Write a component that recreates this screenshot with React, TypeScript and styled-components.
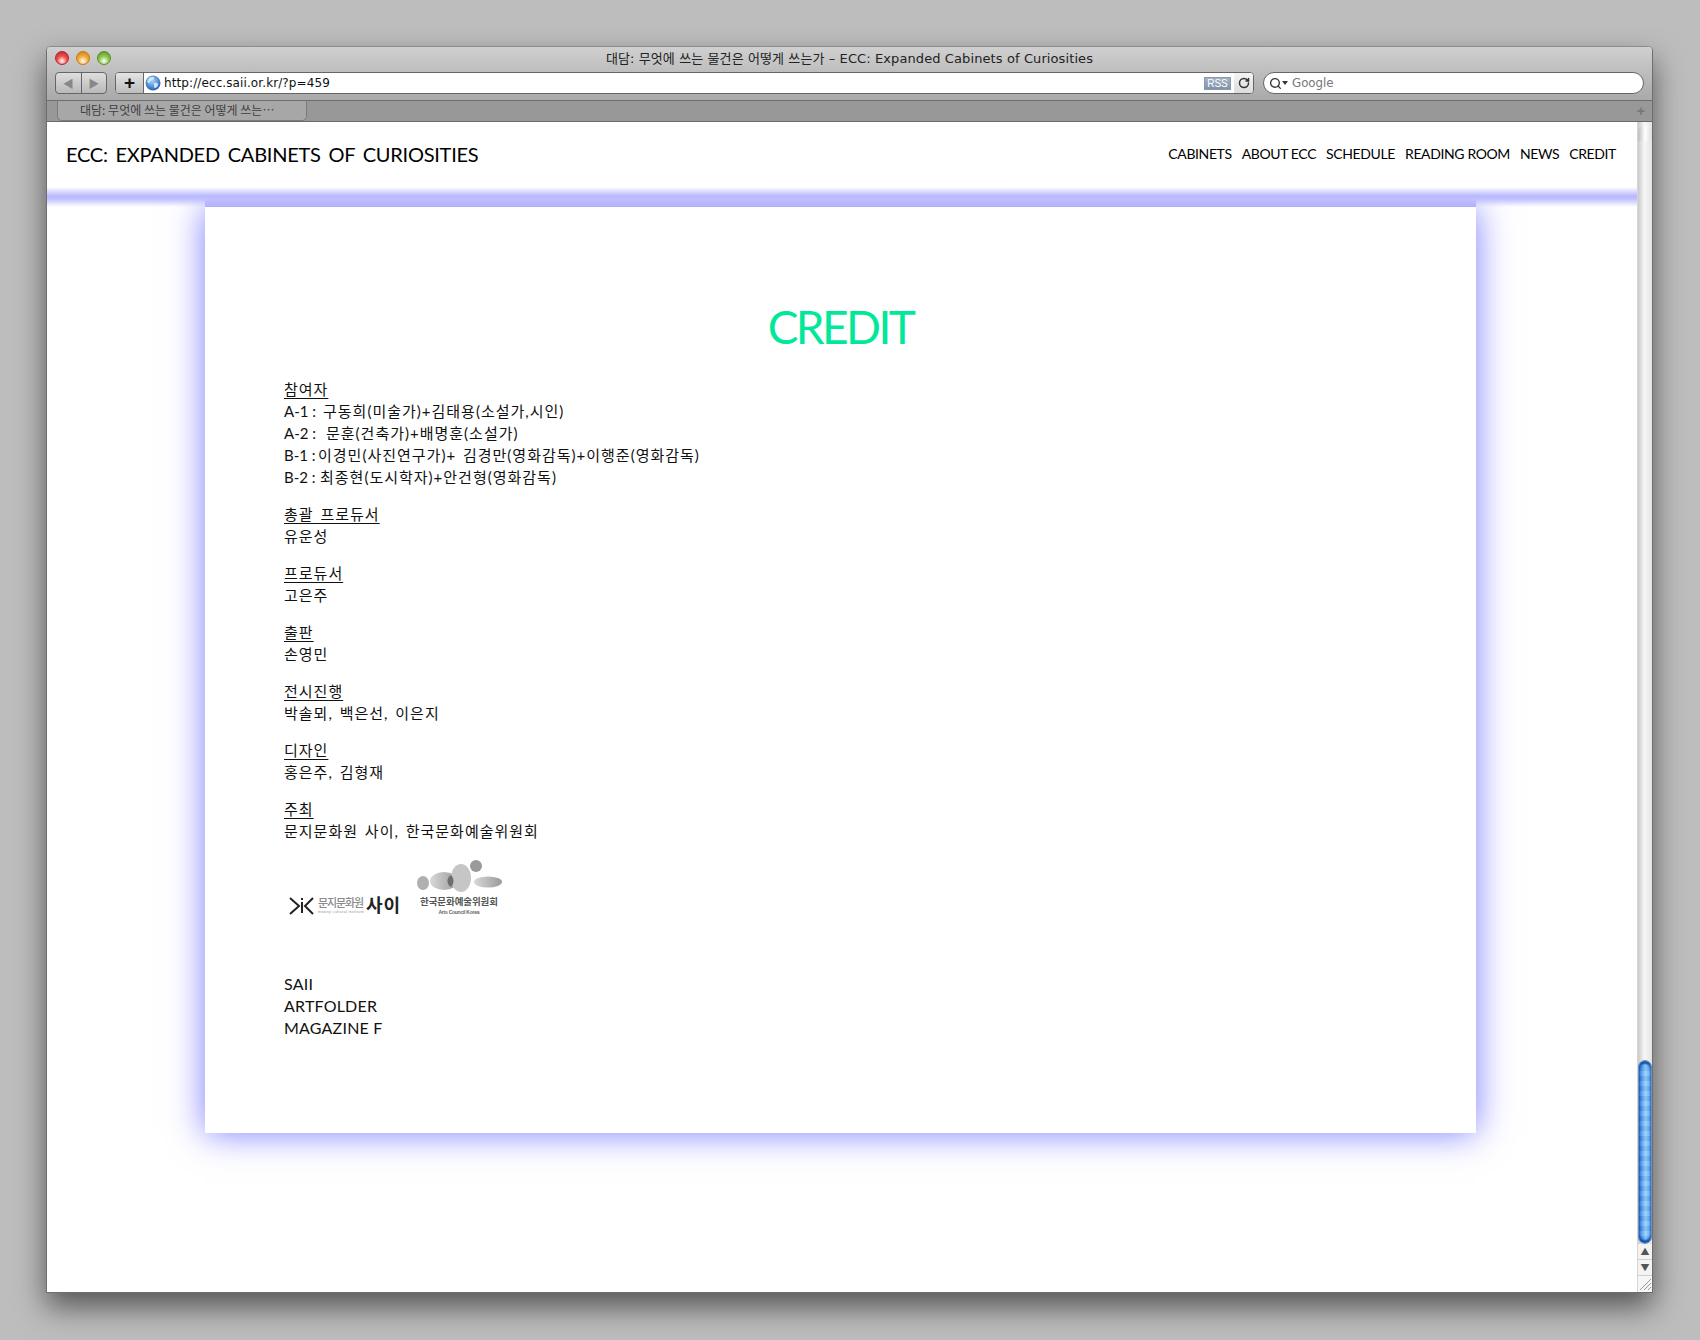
import React from 'react';
import styled, { createGlobalStyle } from 'styled-components';
import { RotateCw, Search } from 'lucide-react';

const KO = `'Noto Sans CJK KR', sans-serif`;

const GlobalStyle = createGlobalStyle`
  html, body { margin: 0; padding: 0; }
  body {
    width: 1700px;
    height: 1340px;
    overflow: hidden;
    background: #bdbdbd;
    font-family: 'Lato', ${KO};
  }
`;

const Desktop = styled.div`
  padding: 46px 47px 48px 46px;
  height: 1340px;
  box-sizing: border-box;
`;

const Window = styled.div`
  height: 1245px;
  display: flex;
  flex-direction: column;
  border: 1px solid #6e6e6e;
  border-top-color: #8c8c8c;
  border-radius: 5px 5px 0 0;
  box-shadow: 0 14px 30px rgba(0, 0, 0, 0.55);
  overflow: hidden;
  background: #fff;
`;

const Chrome = styled.div`
  height: 53px;
  flex: none;
  display: flex;
  flex-direction: column;
  background: linear-gradient(#d0d0d0, #a9a9a9);
  border-bottom: 1px solid #6f6f6f;
`;

const TitleRow = styled.div`
  position: relative;
  height: 25px;
  padding-bottom: 4px;
  box-sizing: border-box;
  display: flex;
  align-items: center;
  justify-content: center;
  font: 13px 'DejaVu Sans', ${KO};
  letter-spacing: 0.1px;
  color: #222;
`;

const Lights = styled.div`
  position: absolute;
  left: 8px;
  top: 4px;
  display: flex;
  gap: 7px;
`;

const Light = styled.span<{ $color: string; $dark: string }>`
  width: 14px;
  height: 14px;
  border-radius: 50%;
  border: 1px solid ${(p) => p.$dark};
  box-sizing: border-box;
  background: radial-gradient(circle at 50% 75%, #fff 0%, ${(p) => p.$color} 45%, ${(p) => p.$dark} 100%);
`;

const ToolRow = styled.div`
  height: 22px;
  display: flex;
  align-items: stretch;
  padding: 0 8px;
`;

const NavGroup = styled.div`
  width: 52px;
  display: flex;
  margin-right: 8px;
  border: 1px solid #666;
  border-radius: 4px;
  box-sizing: border-box;
  background: linear-gradient(#dedede, #b9b9b9);
`;

const NavButton = styled.div<{ $first?: boolean }>`
  flex: 1;
  display: flex;
  align-items: center;
  justify-content: center;
  color: #888;
  font-size: 11px;
  border-right: ${(p) => (p.$first ? '1px solid #666' : 'none')};
`;

const AddressBox = styled.div`
  width: 1139px;
  display: flex;
  align-items: stretch;
  border: 1px solid #666;
  border-radius: 4px;
  box-sizing: border-box;
  overflow: hidden;
  background: #fff;
`;

const PlusButton = styled.div`
  width: 27px;
  flex: none;
  display: flex;
  align-items: center;
  justify-content: center;
  font: bold 19px 'Liberation Sans', sans-serif;
  color: #111;
  background: linear-gradient(#e4e4e4, #bdbdbd);
  border-right: 1px solid #666;
`;

const UrlText = styled.div`
  flex: 1;
  display: flex;
  align-items: center;
  gap: 3px;
  padding-left: 1px;
  font: 12px 'DejaVu Sans', sans-serif;
  letter-spacing: 0.1px;
  color: #111;
`;

const RssBadge = styled.div`
  width: 27px;
  height: 13px;
  align-self: center;
  margin-right: 3px;
  display: flex;
  align-items: center;
  justify-content: center;
  font: 10px 'Liberation Sans', sans-serif;
  color: #fff;
  background: linear-gradient(#a3b3c4, #7f93a8);
  border: 1px solid #8a9aac;
  box-sizing: border-box;
`;

const ReloadButton = styled.div`
  width: 19px;
  display: flex;
  align-items: center;
  justify-content: center;
  color: #333;
  background: linear-gradient(#f4f4f4, #dcdcdc);
`;

const SearchBox = styled.div`
  width: 381px;
  margin-left: 9px;
  display: flex;
  align-items: center;
  padding-left: 5px;
  border: 1px solid #666;
  border-radius: 11px;
  box-sizing: border-box;
  background: #fff;
  font: 11.8px 'DejaVu Sans', sans-serif;
  color: #777;
`;

const Caret = styled.span`
  width: 0;
  height: 0;
  margin: 0 4px 0 0;
  border: 3px solid transparent;
  border-top: 4px solid #333;
  border-bottom: 0;
`;

const TabBar = styled.div`
  height: 20px;
  flex: none;
  display: flex;
  justify-content: space-between;
  padding: 0 7px 0 10px;
  background: #989898;
  border-bottom: 1px solid #6a6a6a;
`;

const Tab = styled.div`
  width: 250px;
  box-sizing: border-box;
  padding-left: 22px;
  padding-bottom: 2px;
  display: flex;
  align-items: center;
  border: 1px solid #7c7c7c;
  border-top: 0;
  border-radius: 0 0 5px 5px;
  background: #a7a7a7;
  font: 12px ${KO};
  color: #3f3f3f;
`;

const TabPlus = styled.div`
  align-self: center;
  font: bold 14px 'Liberation Sans', sans-serif;
  color: #777;
`;

const Viewport = styled.div`
  flex: 1;
  min-height: 0;
  display: flex;
`;

const Page = styled.div`
  flex: 1;
  min-width: 0;
  position: relative;
  overflow: hidden;
  background: #fff;
`;

const Header = styled.header`
  position: relative;
  z-index: 2;
  height: 65px;
  display: flex;
  align-items: flex-start;
  justify-content: space-between;
  padding: 20px 21px 0 19px;
  box-sizing: border-box;
  background: #fff;
  color: #000;
`;

const SiteTitle = styled.div`
  font-size: 20px;
  line-height: 24px;
  letter-spacing: -0.25px;
  word-spacing: 3px;
  white-space: nowrap;
`;

const Nav = styled.nav`
  display: flex;
  gap: 10px;
  font-size: 14px;
  letter-spacing: -0.38px;
  line-height: 24px;
  white-space: nowrap;
`;

const HeaderGlow = styled.div`
  position: relative;
  z-index: 1;
  height: 20px;
  background: linear-gradient(#fff, #b8b8ff 45%, #c0c0ff 60%, rgba(255, 255, 255, 0));
`;

const Card = styled.main`
  position: relative;
  width: 1271px;
  height: 926px;
  margin-left: 158px;
  padding: 93px 79px 0;
  box-sizing: border-box;
  background: #fff;
  box-shadow: 0 0 34px #7c7cff;

  &::before {
    content: '';
    position: absolute;
    left: 0;
    right: 0;
    top: -10px;
    height: 10px;
    background: #b0b0ff;
  }
`;

const Heading = styled.h1`
  margin: 0 0 24px;
  text-align: center;
  font-size: 46px;
  line-height: 54px;
  font-weight: 400;
  letter-spacing: -2.6px;
  color: #00e898;
`;

const Block = styled.section`
  margin-bottom: 15px;
  font-size: 15px;
  line-height: 22px;
  letter-spacing: 1px;
  word-spacing: 2px;
  color: #111;
`;

const Line = styled.div`
  white-space: nowrap;
`;

const Prefix = styled.span<{ $width: number }>`
  display: inline-block;
  width: ${(p) => p.$width}px;
  letter-spacing: 0;
  word-spacing: 0;
`;

const Label = styled(Line)`
  text-decoration: underline;
  text-underline-offset: 3px;
`;

const Logos = styled.svg`
  display: block;
  margin: -1px 0 52px;
`;

const Partner = styled.div`
  font-size: 16px;
  line-height: 22px;
  letter-spacing: 0.2px;
  color: #111;
`;

const Scrollbar = styled.aside`
  width: 14px;
  flex: none;
  display: flex;
  flex-direction: column;
  background: linear-gradient(90deg, #c9c9c9, #f7f7f7 45%, #e4e4e4);
  border-left: 1px solid #d5d5d5;
`;

const TrackCap = styled.div`
  height: 16px;
  margin-top: 3px;
  border-radius: 7px 7px 0 0;
  background: linear-gradient(90deg, #bbb, #fff 50%, #ddd);
`;

const Track = styled.div`
  flex: 1;
`;

const Thumb = styled.div`
  height: 184px;
  border-radius: 7px;
  border: 1px solid #7d8da3;
  box-sizing: border-box;
  background:
    repeating-linear-gradient(rgba(255, 255, 255, 0.1) 0 5px, rgba(0, 40, 120, 0.06) 5px 10px),
    linear-gradient(90deg, #2272dc, #95d0fb 55%, #4c9cef);
  box-shadow: inset 0 3px 2px #0b50bc, inset 0 -3px 2px #0b50bc;
`;

const Arrow = styled.div`
  height: 15px;
  display: flex;
  align-items: center;
  justify-content: center;
  font-size: 9px;
  line-height: 1;
  color: #555;
  border-bottom: 1px solid #cfcfcf;
  background: #f3f3f3;
`;

const Grip = styled.svg`
  display: block;
  height: 16px;
  width: 14px;
  background: #f6f6f6;
`;

const participants = [
  { prefix: 'A-1 : ', width: 39, names: '구동희(미술가)+김태용(소설가,시인)' },
  { prefix: 'A-2 : ', width: 42, names: '문훈(건축가)+배명훈(소설가)' },
  { prefix: 'B-1 : ', width: 34, names: '이경민(사진연구가)+ 김경만(영화감독)+이행준(영화감독)' },
  { prefix: 'B-2 : ', width: 36, names: '최종현(도시학자)+안건형(영화감독)' },
];

const blocks = [
  { label: '총괄 프로듀서', lines: ['유운성'] },
  { label: '프로듀서', lines: ['고은주'] },
  { label: '출판', lines: ['손영민'] },
  { label: '전시진행', lines: ['박솔뫼, 백은선, 이은지'] },
  { label: '디자인', lines: ['홍은주, 김형재'] },
  { label: '주최', lines: ['문지문화원 사이, 한국문화예술위원회'] },
];

const navItems = ['CABINETS', 'ABOUT ECC', 'SCHEDULE', 'READING ROOM', 'NEWS', 'CREDIT'];
const partners = ['SAII', 'ARTFOLDER', 'MAGAZINE F'];

const Globe = () => (
  <svg width="16" height="16" viewBox="0 0 16 16">
    <defs>
      <radialGradient id="globe" cx="45%" cy="35%" r="70%">
        <stop offset="0%" stopColor="#a9d8fb" />
        <stop offset="100%" stopColor="#1659b5" />
      </radialGradient>
    </defs>
    <circle cx="8" cy="8" r="7.5" fill="url(#globe)" />
    <path d="M5 2.500c2-1 3.500-.5 4 .5s-1 1.500-2 2-2.500 1-2.500 2.500S3 8 2.500 7 3.500 3.500 5 2.500zM9.500 8c1.500-.5 3 0 3.500 1s-1 3.500-2.500 4-1.500-1-1.500-2.500S8.500 8.500 9.500 8z" fill="#e8eef5" opacity="0.85" />
  </svg>
);

const LogoArt = () => (
  <Logos width="226" height="65" viewBox="0 0 226 65">
    <defs>
      <linearGradient id="soft" x1="0" x2="1">
        <stop offset="0%" stopColor="#9a9a9a" />
        <stop offset="100%" stopColor="#d8d8d8" />
      </linearGradient>
    </defs>
    <path d="M6 42l9 8-9 8M29 42l-8 8 8 8" fill="none" stroke="#222" strokeWidth="2" />
    <rect x="17" y="46" width="2" height="11" fill="#222" />
    <rect x="17" y="42" width="2" height="2" fill="#222" />
    <text x="34" y="51" fontSize="11" fill="#8a8a8a" fontFamily="'Noto Sans CJK KR', sans-serif" fontWeight="500" textLength="46">
      문지문화원
    </text>
    <text x="34" y="57" fontSize="4" fill="#999" fontFamily="'Liberation Sans', sans-serif" textLength="46">
      moonji cultural institute
    </text>
    <text x="82" y="56" fontSize="18" fill="#222" fontFamily="'Noto Sans CJK KR', sans-serif" fontWeight="700" textLength="34">
      사이
    </text>
    <ellipse cx="139" cy="27" rx="6" ry="7" fill="#b0b0b0" />
    <ellipse cx="160" cy="25" rx="14" ry="9" fill="url(#soft)" transform="rotate(180 160 25)" />
    <ellipse cx="177" cy="22" rx="10" ry="14" fill="#c6c6c6" />
    <path d="M167 19a10 9 0 0 1 0 12a14 9 0 0 1 0-12z" fill="#6e6e6e" />
    <circle cx="192" cy="10" r="6" fill="#9a9a9a" />
    <ellipse cx="204" cy="26" rx="14" ry="5.500" fill="url(#soft)" transform="rotate(180 204 26)" />
    <text x="175" y="49" textAnchor="middle" fontSize="9.500" fontWeight="700" fill="#555" fontFamily="'Noto Sans CJK KR', sans-serif" textLength="78">
      한국문화예술위원회
    </text>
    <text x="175" y="58" textAnchor="middle" fontSize="5" fontWeight="700" fill="#666" fontFamily="'Liberation Sans', sans-serif" textLength="41">
      Arts Council Korea
    </text>
  </Logos>
);

export default function App() {
  return (
    <>
      <GlobalStyle />
      <Desktop>
        <Window>
          <Chrome>
            <TitleRow>
              <Lights>
                <Light $color="#ee5050" $dark="#b81f1f" />
                <Light $color="#f3ad3a" $dark="#c47a12" />
                <Light $color="#8cc84e" $dark="#558f22" />
              </Lights>
              대담: 무엇에 쓰는 물건은 어떻게 쓰는가 – ECC: Expanded Cabinets of Curiosities
            </TitleRow>
            <ToolRow>
              <NavGroup>
                <NavButton $first>◀</NavButton>
                <NavButton>▶</NavButton>
              </NavGroup>
              <AddressBox>
                <PlusButton>+</PlusButton>
                <UrlText>
                  <Globe />
                  http://ecc.saii.or.kr/?p=459
                </UrlText>
                <RssBadge>RSS</RssBadge>
                <ReloadButton>
                  <RotateCw size={12} strokeWidth={3} />
                </ReloadButton>
              </AddressBox>
              <SearchBox>
                <Search size={13} strokeWidth={2.5} color="#333" />
                <Caret />
                Google
              </SearchBox>
            </ToolRow>
          </Chrome>
          <TabBar>
            <Tab>대담: 무엇에 쓰는 물건은 어떻게 쓰는…</Tab>
            <TabPlus>+</TabPlus>
          </TabBar>
          <Viewport>
            <Page>
              <Header>
                <SiteTitle>ECC: EXPANDED CABINETS OF CURIOSITIES</SiteTitle>
                <Nav>
                  {navItems.map((item) => (
                    <span key={item}>{item}</span>
                  ))}
                </Nav>
              </Header>
              <HeaderGlow />
              <Card>
                <Heading>CREDIT</Heading>
                <Block>
                  <Label>참여자</Label>
                  {participants.map((row) => (
                    <Line key={row.prefix}>
                      <Prefix $width={row.width}>{row.prefix}</Prefix>
                      {row.names}
                    </Line>
                  ))}
                </Block>
                {blocks.map((block) => (
                  <Block key={block.label}>
                    <Label>{block.label}</Label>
                    {block.lines.map((line) => (
                      <Line key={line}>{line}</Line>
                    ))}
                  </Block>
                ))}
                <LogoArt />
                {partners.map((name) => (
                  <Partner key={name}>{name}</Partner>
                ))}
              </Card>
            </Page>
            <Scrollbar>
              <TrackCap />
              <Track />
              <Thumb />
              <Arrow>▲</Arrow>
              <Arrow>▼</Arrow>
              <Grip viewBox="0 0 14 16">
                <path d="M2 14L13 3M6 14l7-7M10 14l3-3" stroke="#999" strokeWidth="1" />
              </Grip>
            </Scrollbar>
          </Viewport>
        </Window>
      </Desktop>
    </>
  );
}
